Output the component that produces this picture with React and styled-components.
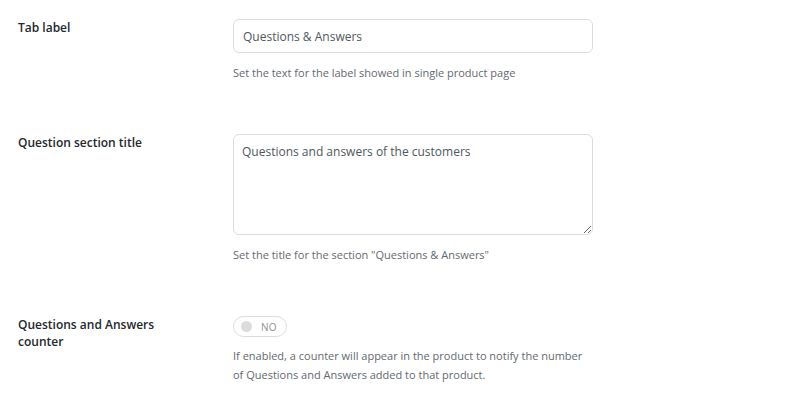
import React from "react";
import styled, { createGlobalStyle } from "styled-components";

const Global = createGlobalStyle`
  body {
    margin: 0;
    background: #fff;
    font-family: "Open Sans", "Noto Sans", sans-serif;
  }
`;

const Page = styled.div`
  padding: 19px 0 0 18px;
`;

const Row = styled.div`
  display: grid;
  grid-template-columns: 215px 360px;
  margin-bottom: ${(p) => p.gap || 52}px;
`;

const Label = styled.div`
  font-size: 12px;
  font-weight: 600;
  color: #23282d;
  line-height: 17px;
  width: 150px;
`;

const Field = styled.div`
  display: flex;
  flex-direction: column;
  align-items: flex-start;
`;

const TextInput = styled.input`
  box-sizing: border-box;
  width: 360px;
  height: 34px;
  border: 1px solid #dcdcde;
  border-radius: 6px;
  padding: 0 9px;
  font-family: inherit;
  font-size: 12px;
  color: #50575e;
  outline: none;
`;

const TextArea = styled.textarea`
  box-sizing: border-box;
  width: 360px;
  height: 101px;
  border: 1px solid #dcdcde;
  border-radius: 6px;
  padding: 8px 8px;
  font-family: inherit;
  font-size: 12px;
  line-height: 18px;
  color: #50575e;
  outline: none;
  resize: vertical;
  margin: 0;
  display: block;
`;

const Help = styled.p`
  margin: ${(p) => p.top || 10}px 0 0;
  font-size: 11px;
  line-height: 19px;
  color: #646970;
  max-width: 360px;
`;

const Toggle = styled.div`
  box-sizing: border-box;
  width: 54px;
  height: 21px;
  border: 1px solid #dcdcde;
  border-radius: 11px;
  display: flex;
  align-items: center;
  padding-left: 7px;
  gap: 9px;
`;

const Knob = styled.span`
  width: 11px;
  height: 11px;
  border-radius: 50%;
  background: #dcdcde;
`;

const ToggleText = styled.span`
  font-size: 10px;
  color: #8c8f94;
  letter-spacing: 0.2px;
`;

export default function App() {
  return (
    <Page>
      <Global />
      <Row>
        <Label>Tab label</Label>
        <Field>
          <TextInput defaultValue="Questions & Answers" />
          <Help>Set the text for the label showed in single product page</Help>
        </Field>
      </Row>
      <Row gap={52}>
        <Label>Question section title</Label>
        <Field>
          <TextArea defaultValue="Questions and answers of the customers" />
          <Help>Set the title for the section "Questions &amp; Answers"</Help>
        </Field>
      </Row>
      <Row>
        <Label>Questions and Answers counter</Label>
        <Field>
          <Toggle>
            <Knob />
            <ToggleText>NO</ToggleText>
          </Toggle>
          <Help top={9}>
            If enabled, a counter will appear in the product to notify the number
            of Questions and Answers added to that product.
          </Help>
        </Field>
      </Row>
    </Page>
  );
}
